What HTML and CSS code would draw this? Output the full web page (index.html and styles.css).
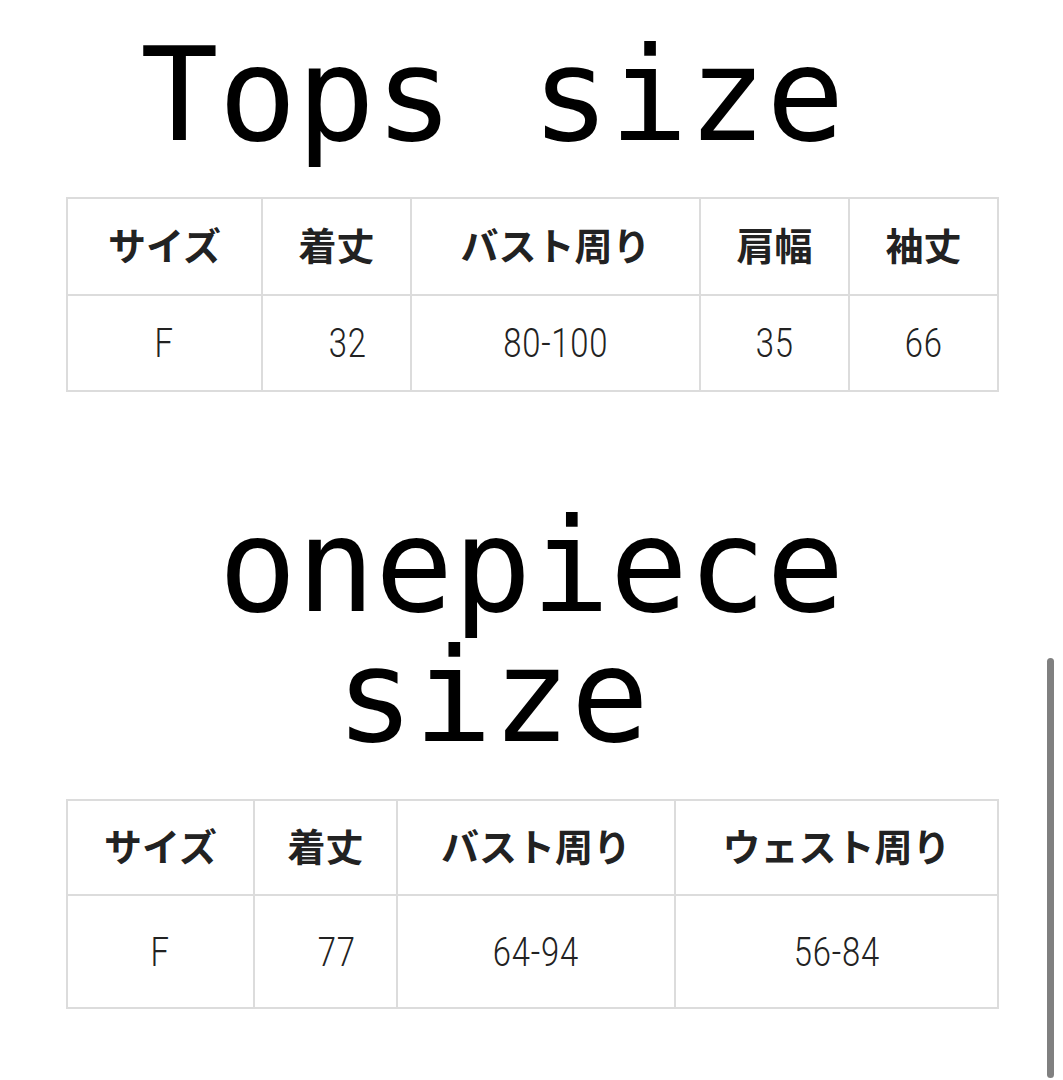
FILE: index.html
```html
<!DOCTYPE html>
<html lang="ja">
<head>
<meta charset="utf-8">
<title>Size</title>
<link rel="stylesheet" href="styles.css">
</head>
<body>
<main class="page">
  <h1 class="title title-tops">Tops size&nbsp;</h1>
  <table class="size-table tops">
    <colgroup>
      <col class="c195"><col class="c149"><col class="c289"><col class="c149"><col class="c149">
    </colgroup>
    <tr class="head-row">
      <th>サイズ</th><th>着丈</th><th>バスト周り</th><th>肩幅</th><th>袖丈</th>
    </tr>
    <tr class="data-row">
      <td><span class="num">F</span></td>
      <td class="shift"><span class="num">32</span></td>
      <td><span class="num">80-100</span></td>
      <td><span class="num">35</span></td>
      <td><span class="num">66</span></td>
    </tr>
  </table>

  <h1 class="title title-one">onepiece size&nbsp;</h1>
  <table class="size-table onepiece">
    <colgroup>
      <col class="c187"><col class="c143"><col class="c278"><col class="c323">
    </colgroup>
    <tr class="head-row">
      <th>サイズ</th><th>着丈</th><th>バスト周り</th><th>ウェスト周り</th>
    </tr>
    <tr class="data-row tall">
      <td><span class="num">F</span></td>
      <td class="shift"><span class="num">77</span></td>
      <td><span class="num">64-94</span></td>
      <td><span class="num">56-84</span></td>
    </tr>
  </table>
</main>
<div class="scrollbar" aria-hidden="true"></div>
</body>
</html>
```

FILE: styles.css
```css
html, body {
  margin: 0;
  padding: 0;
  background: #ffffff;
}

body {
  position: relative;
  width: 1063px;
  height: 1080px;
  overflow: hidden;
}

.page {
  width: 931px;
  margin-left: 66px;
  padding-top: 30px;
}

.title {
  margin: 0;
  font-family: "DejaVu Sans Mono", monospace;
  font-weight: normal;
  font-size: 130px;
  line-height: 130px;
  color: #000;
  text-align: center;
}

.title-tops {
  margin-bottom: 37px;
}

.title-one {
  margin-top: 109px;
  margin-bottom: 38px;
}

.size-table {
  width: 931px;
  border-collapse: collapse;
  table-layout: fixed;
  border: 2px solid #dcdcdc;
}

.size-table th,
.size-table td {
  border: 2.5px solid #dcdcdc;
  padding: 0;
  text-align: center;
  vertical-align: middle;
}

.size-table th {
  font-family: "Noto Sans CJK JP", sans-serif;
  font-weight: 700;
  font-size: 38px;
  line-height: 44px;
  color: #222;
  padding-bottom: 6px;
}

.tops .head-row { height: 97px; }
.tops .data-row { height: 96px; }
.onepiece .head-row { height: 95px; }
.onepiece .data-row { height: 113px; }

.c195 { width: 195px; }
.c149 { width: 149px; }
.c289 { width: 289px; }
.c187 { width: 187px; }
.c143 { width: 143px; }
.c278 { width: 278px; }
.c323 { width: 323px; }

.num {
  display: inline-block;
  font-family: Roboto, sans-serif;
  font-weight: 300;
  font-size: 41px;
  line-height: 42px;
  color: #222;
  letter-spacing: 1px;
  transform: scaleX(0.8);
}

.shift {
  padding-left: 22px !important;
}

.scrollbar {
  position: absolute;
  right: 9px;
  top: 658px;
  width: 7px;
  height: 420px;
  border-radius: 4px;
  background: #808080;
}
```
